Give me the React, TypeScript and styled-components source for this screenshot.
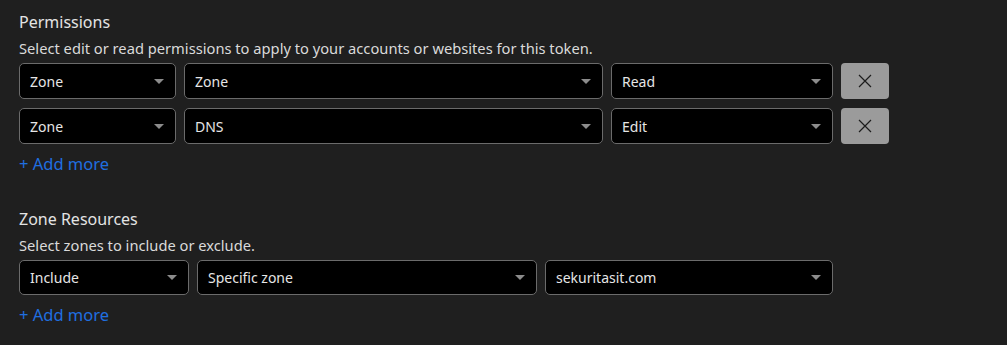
import React from 'react';
import styled, { createGlobalStyle } from 'styled-components';

const GlobalStyle = createGlobalStyle`
  html, body {
    margin: 0;
    padding: 0;
    background: #1f1f1f;
  }
  body {
    font-family: "Noto Sans", "Open Sans", sans-serif;
    color: #e2e2e2;
  }
`;

interface SelectProps {
  value: string;
  width: number;
  short?: boolean;
}

const Select: React.FC<SelectProps> = ({ value, width, short }) => {
  return (
    <SelectBox $width={width} $short={short}>
      <span className="value">{value}</span>
      <span className="caret" />
    </SelectBox>
  );
};

const RemoveButton: React.FC = () => (
  <Remove type="button" aria-label="Remove">
    <svg width="14" height="14" viewBox="0 0 14 14">
      <path d="M1 1 L13 13 M13 1 L1 13" stroke="#1c1c1c" strokeWidth="1.2" fill="none" />
    </svg>
  </Remove>
);

const permissions = [
  { scope: 'Zone', group: 'Zone', level: 'Read' },
  { scope: 'Zone', group: 'DNS', level: 'Edit' },
];

const App: React.FC = () => {
  return (
    <Page>
      <GlobalStyle />
      <Section>
        <Title>Permissions</Title>
        <Desc>Select edit or read permissions to apply to your accounts or websites for this token.</Desc>
        <Rows>
          {permissions.map((p, i) => (
            <Row key={i}>
              <Select value={p.scope} width={157} />
              <Select value={p.group} width={419} />
              <Select value={p.level} width={222} />
              <RemoveButton />
            </Row>
          ))}
        </Rows>
        <AddMore>+ Add more</AddMore>
      </Section>
      <Section>
        <Title>Zone Resources</Title>
        <Desc>Select zones to include or exclude.</Desc>
        <Rows>
          <Row>
            <Select value="Include" width={170} short />
            <Select value="Specific zone" width={340} short />
            <Select value="sekuritasit.com" width={288} short />
          </Row>
        </Rows>
        <AddMore>+ Add more</AddMore>
      </Section>
    </Page>
  );
};

const Page = styled.div`
  padding: 11px 19px 0;
  display: flex;
  flex-direction: column;
  gap: 32px;
`;

const Section = styled.section`
  display: flex;
  flex-direction: column;
  align-items: flex-start;
`;

const Title = styled.h2`
  margin: 0;
  font-size: 16px;
  font-weight: 400;
  line-height: 22px;
  color: #e4e4e4;
`;

const Desc = styled.p`
  margin: 4px 0 0;
  font-size: 14.7px;
  line-height: 22px;
  color: #dadada;
`;

const Rows = styled.div`
  margin-top: 4px;
  display: flex;
  flex-direction: column;
  gap: 9px;
`;

const Row = styled.div`
  display: flex;
  gap: 8px;
`;

const SelectBox = styled.div<{ $width: number; $short?: boolean }>`
  box-sizing: border-box;
  width: ${({ $width }) => $width}px;
  height: ${({ $short }) => ($short ? 35 : 36)}px;
  background: #000;
  border: 1px solid #6b6b6b;
  border-radius: 5px;
  display: flex;
  align-items: center;
  justify-content: space-between;
  padding: 0 11px 0 10px;
  font-size: 14px;
  color: #e6e6e6;
  .caret {
    width: 0;
    height: 0;
    border-left: 5px solid transparent;
    border-right: 5px solid transparent;
    border-top: 5px solid #8c8c8c;
  }
`;

const Remove = styled.button`
  box-sizing: border-box;
  width: 48px;
  height: 36px;
  border: none;
  border-radius: 4px;
  background: #9b9b9b;
  display: flex;
  align-items: center;
  justify-content: center;
  padding: 0;
`;

const AddMore = styled.a`
  margin-top: 8px;
  font-size: 16.5px;
  line-height: 24px;
  color: #1f6fe0;
  cursor: pointer;
`;

export default App;
